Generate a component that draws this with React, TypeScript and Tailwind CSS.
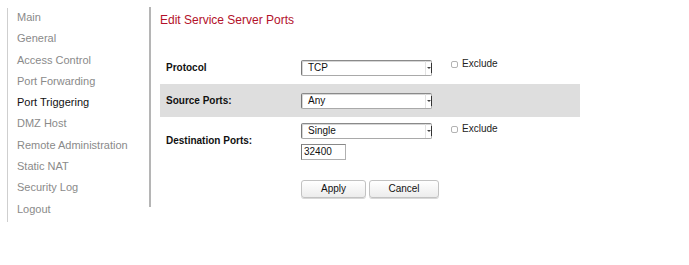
import React from "react";

const navItems = [
  "Main",
  "General",
  "Access Control",
  "Port Forwarding",
  "Port Triggering",
  "DMZ Host",
  "Remote Administration",
  "Static NAT",
  "Security Log",
  "Logout",
];

const ACTIVE = "Port Triggering";

function FakeSelect({ value }: { value: string }) {
  return (
    <div className="relative flex h-[16px] w-[131px] items-center rounded-[2px] border border-[#a9a9a9] border-t-[#8a8a8a] border-l-[#777] bg-white shadow-[inset_1px_1px_0_#d6d6d6]">
      <span className="pl-[6px] text-[10px] leading-none text-[#111]">{value}</span>
      <div className="absolute right-0 top-0 flex h-full w-[6px] items-center justify-center border-l border-[#e2e2e2]">
        <span className="block h-0 w-0 border-x-[2px] border-t-[2px] border-x-transparent border-t-[#444]" />
      </div>
      <div className="absolute right-[-1px] top-[2px] h-[10px] w-[1px] bg-[#333]" />
    </div>
  );
}

function Exclude() {
  return (
    <label className="flex items-center gap-[4px] text-[10px] leading-none text-[#222]">
      <span className="block h-[7px] w-[7px] rounded-[2px] border border-[#b3b3b3] bg-white" />
      Exclude
    </label>
  );
}

export default function App() {
  return (
    <div
      className="flex h-[265px] w-[689px] bg-white pt-[8px]"
      style={{ fontFamily: '"Liberation Sans", Arial, sans-serif' }}
    >
      {/* Sidebar */}
      <div className="ml-[7px] h-[214px] border-l border-[#cfcfcf]">
        <nav className="mt-[-1px] flex h-[200px] w-[143px] flex-col border-r-2 border-[#b5b5b5] pl-[9px]">
          {navItems.map((item) => (
            <a
              key={item}
              className={`block h-[21.3px] text-[11px] leading-[21.3px] ${
                item === ACTIVE ? "text-[#111]" : "text-[#8a8a8a]"
              }`}
            >
              {item}
            </a>
          ))}
        </nav>
      </div>

      {/* Content */}
      <div className="ml-[9px] flex w-[420px] flex-col pt-[4px]">
        <h1 className="text-[12px] leading-[16px] text-[#b3112a]">Edit Service Server Ports</h1>

        <div className="mt-[27px] flex flex-col">
          {/* Protocol */}
          <div className="flex h-[29px] items-start pt-[5px]">
            <div className="w-[141px] pl-[6px] pt-[2px] text-[10px] font-bold leading-[12px] text-[#111]">
              Protocol
            </div>
            <FakeSelect value="TCP" />
            <div className="ml-[19px] mt-[-1px]">
              <Exclude />
            </div>
          </div>

          {/* Source Ports */}
          <div className="flex h-[33px] items-center bg-[#dedede]">
            <div className="w-[141px] pl-[6px] text-[10px] font-bold leading-[12px] text-[#111]">
              Source Ports:
            </div>
            <FakeSelect value="Any" />
          </div>

          {/* Destination Ports */}
          <div className="flex h-[48px] items-center">
            <div className="w-[141px] pl-[6px] text-[10px] font-bold leading-[12px] text-[#111]">
              Destination Ports:
            </div>
            <div className="flex flex-col gap-[5px] pt-[1px]">
              <FakeSelect value="Single" />
              <div className="flex h-[16px] w-[45px] items-center border border-[#b0b0b0] border-l-[#777] border-t-[#888] bg-white">
                <span className="pl-[2px] text-[10px] leading-none text-[#111]">32400</span>
              </div>
            </div>
            <div className="mb-[24px] ml-[19px]">
              <Exclude />
            </div>
          </div>

          {/* Buttons */}
          <div className="mt-[15px] flex gap-[3px] pl-[141px]">
            <button className="h-[18px] w-[65px] rounded-[3px] border border-[#c2c2c2] bg-gradient-to-b from-white to-[#ececec] text-[10px] leading-none text-[#111] shadow-[0_1px_0_#d8d8d8]">
              Apply
            </button>
            <button className="h-[18px] w-[70px] rounded-[3px] border border-[#c2c2c2] bg-gradient-to-b from-white to-[#ececec] text-[10px] leading-none text-[#111] shadow-[0_1px_0_#d8d8d8]">
              Cancel
            </button>
          </div>
        </div>
      </div>
    </div>
  );
}
